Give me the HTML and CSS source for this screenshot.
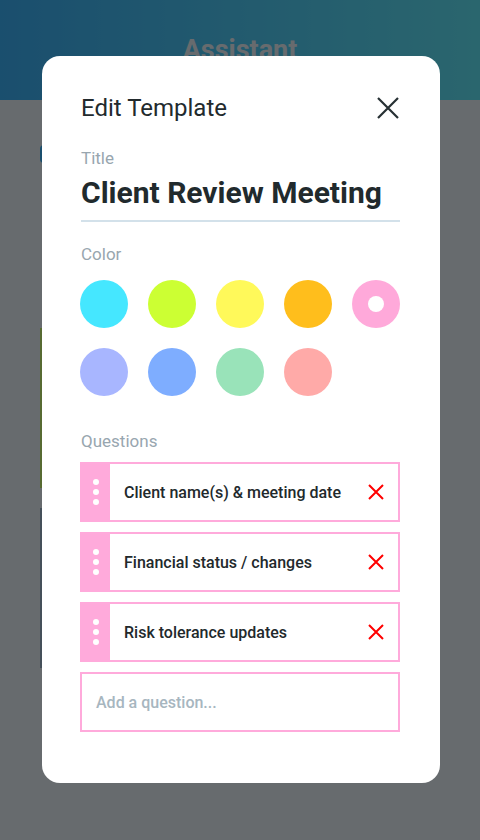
FILE: index.html
```html
<!DOCTYPE html>
<html>

	<head>
		<meta charset="UTF-8">
		<title>Edit Template</title>
		<link rel="stylesheet" href="styles.css">
	</head>

	<body>
		<div class="app">
			<div class="topbar">
				<h1>Assistant</h1>
			</div>
			<div class="feed">
				<div class="pill"></div>
				<div class="card card-green"></div>
				<div class="card card-slate"></div>
			</div>
		</div>

		<div class="backdrop">
			<div class="modal">
				<div class="modal-head">
					<h2>Edit Template</h2>
					<span class="close">
						<svg width="24" height="24" viewBox="0 0 24 24">
							<path d="M2 2L22 22M22 2L2 22" stroke="#263033" stroke-width="2.2" fill="none" />
						</svg>
					</span>
				</div>

				<div class="label">Title</div>
				<div class="title-field">Client Review Meeting</div>

				<div class="label">Color</div>
				<ul class="swatches">
					<li style="background:#45e7ff"></li>
					<li style="background:#ccff33"></li>
					<li style="background:#fff95a"></li>
					<li style="background:#ffbe1c"></li>
					<li class="picked" style="background:#ffa9da"></li>
					<li style="background:#a8b6ff"></li>
					<li style="background:#7eadff"></li>
					<li style="background:#99e3b9"></li>
					<li style="background:#ffaaa8"></li>
				</ul>

				<div class="label">Questions</div>
				<div class="questions">
					<div class="question">
						<div class="handle"><i></i><i></i><i></i></div>
						<span class="q-text">Client name(s) &amp; meeting date</span>
						<span class="remove">
							<svg width="16" height="16" viewBox="0 0 16 16">
								<path d="M1 1L15 15M15 1L1 15" stroke="#ff0000" stroke-width="2" fill="none" />
							</svg>
						</span>
					</div>
					<div class="question">
						<div class="handle"><i></i><i></i><i></i></div>
						<span class="q-text">Financial status / changes</span>
						<span class="remove">
							<svg width="16" height="16" viewBox="0 0 16 16">
								<path d="M1 1L15 15M15 1L1 15" stroke="#ff0000" stroke-width="2" fill="none" />
							</svg>
						</span>
					</div>
					<div class="question">
						<div class="handle"><i></i><i></i><i></i></div>
						<span class="q-text">Risk tolerance updates</span>
						<span class="remove">
							<svg width="16" height="16" viewBox="0 0 16 16">
								<path d="M1 1L15 15M15 1L1 15" stroke="#ff0000" stroke-width="2" fill="none" />
							</svg>
						</span>
					</div>
					<div class="add-question">Add a question...</div>
				</div>
			</div>
		</div>
	</body>

</html>
```

FILE: styles.css
```css
* {
	margin: 0;
	padding: 0;
	box-sizing: border-box;
}

ul {
	list-style: none;
}

body {
	width: 480px;
	height: 840px;
	overflow: hidden;
	background: #ffffff;
	font-family: Roboto, "Liberation Sans", sans-serif;
}

/* app behind the dialog */
.topbar {
	height: 100px;
	background: linear-gradient(90deg, #24aeff 0%, #52f0ff 100%);
	text-align: center;
}

.topbar h1 {
	padding-top: 34px;
	font-size: 27px;
	font-weight: 700;
	color: #ffffff;
}

.feed {
	padding: 45px 40px 0;
}

.pill {
	width: 120px;
	height: 18px;
	background: #24aeff;
	border-radius: 4px;
}

.card {
	height: 160px;
	background: #ffffff;
	border-left: 3px solid;
}

.card-green {
	margin-top: 165px;
	border-color: #d2ff53;
}

.card-slate {
	margin-top: 20px;
	border-color: #9fb1c6;
}

/* dialog */
.backdrop {
	position: fixed;
	top: 0;
	left: 0;
	right: 0;
	bottom: 0;
	background: rgba(22, 28, 32, 0.65);
}

.modal {
	width: 398px;
	height: 727px;
	margin: 56px 0 0 42px;
	padding: 38px 40px 0 38px;
	background: #ffffff;
	border-radius: 18px;
}

.modal-head {
	display: flex;
	justify-content: space-between;
	align-items: center;
	height: 28px;
	padding-left: 1px;
}

.modal-head h2 {
	font-size: 24px;
	font-weight: 400;
	color: #222a2d;
}

.close {
	display: flex;
}

.label {
	padding-left: 1px;
	font-size: 17px;
	color: #98a6af;
}

.modal-head + .label {
	margin-top: 26px;
}

.title-field {
	margin: 7px 0 0 1px;
	padding-bottom: 10px;
	border-bottom: 2px solid #d3e1ea;
	font-size: 30px;
	font-weight: 700;
	color: #212a2d;
}

.title-field + .label {
	margin-top: 22px;
}

.swatches {
	display: grid;
	grid-template-columns: repeat(5, 48px);
	column-gap: 20px;
	row-gap: 20px;
	margin-top: 16px;
}

.swatches li {
	width: 48px;
	height: 48px;
	border-radius: 50%;
	display: flex;
	align-items: center;
	justify-content: center;
}

.swatches li.picked::after {
	content: "";
	width: 16px;
	height: 16px;
	border-radius: 50%;
	background: #ffffff;
}

.swatches + .label {
	margin-top: 35px;
}

.questions {
	display: flex;
	flex-direction: column;
	gap: 10px;
	margin-top: 11px;
}

.question,
.add-question {
	display: flex;
	align-items: center;
	height: 60px;
	border: 2px solid #ffaadb;
	font-size: 16px;
	font-weight: 500;
}

.handle {
	align-self: stretch;
	width: 28px;
	background: #ffaadb;
	display: flex;
	flex-direction: column;
	align-items: center;
	justify-content: center;
	gap: 4px;
}

.handle i {
	width: 6px;
	height: 6px;
	border-radius: 50%;
	background: #ffffff;
}

.q-text {
	flex: 1;
	padding-left: 14px;
	color: #22292c;
}

.remove {
	display: flex;
	margin-right: 14px;
}

.add-question {
	padding-left: 14px;
	color: #a7b6bf;
}
```
